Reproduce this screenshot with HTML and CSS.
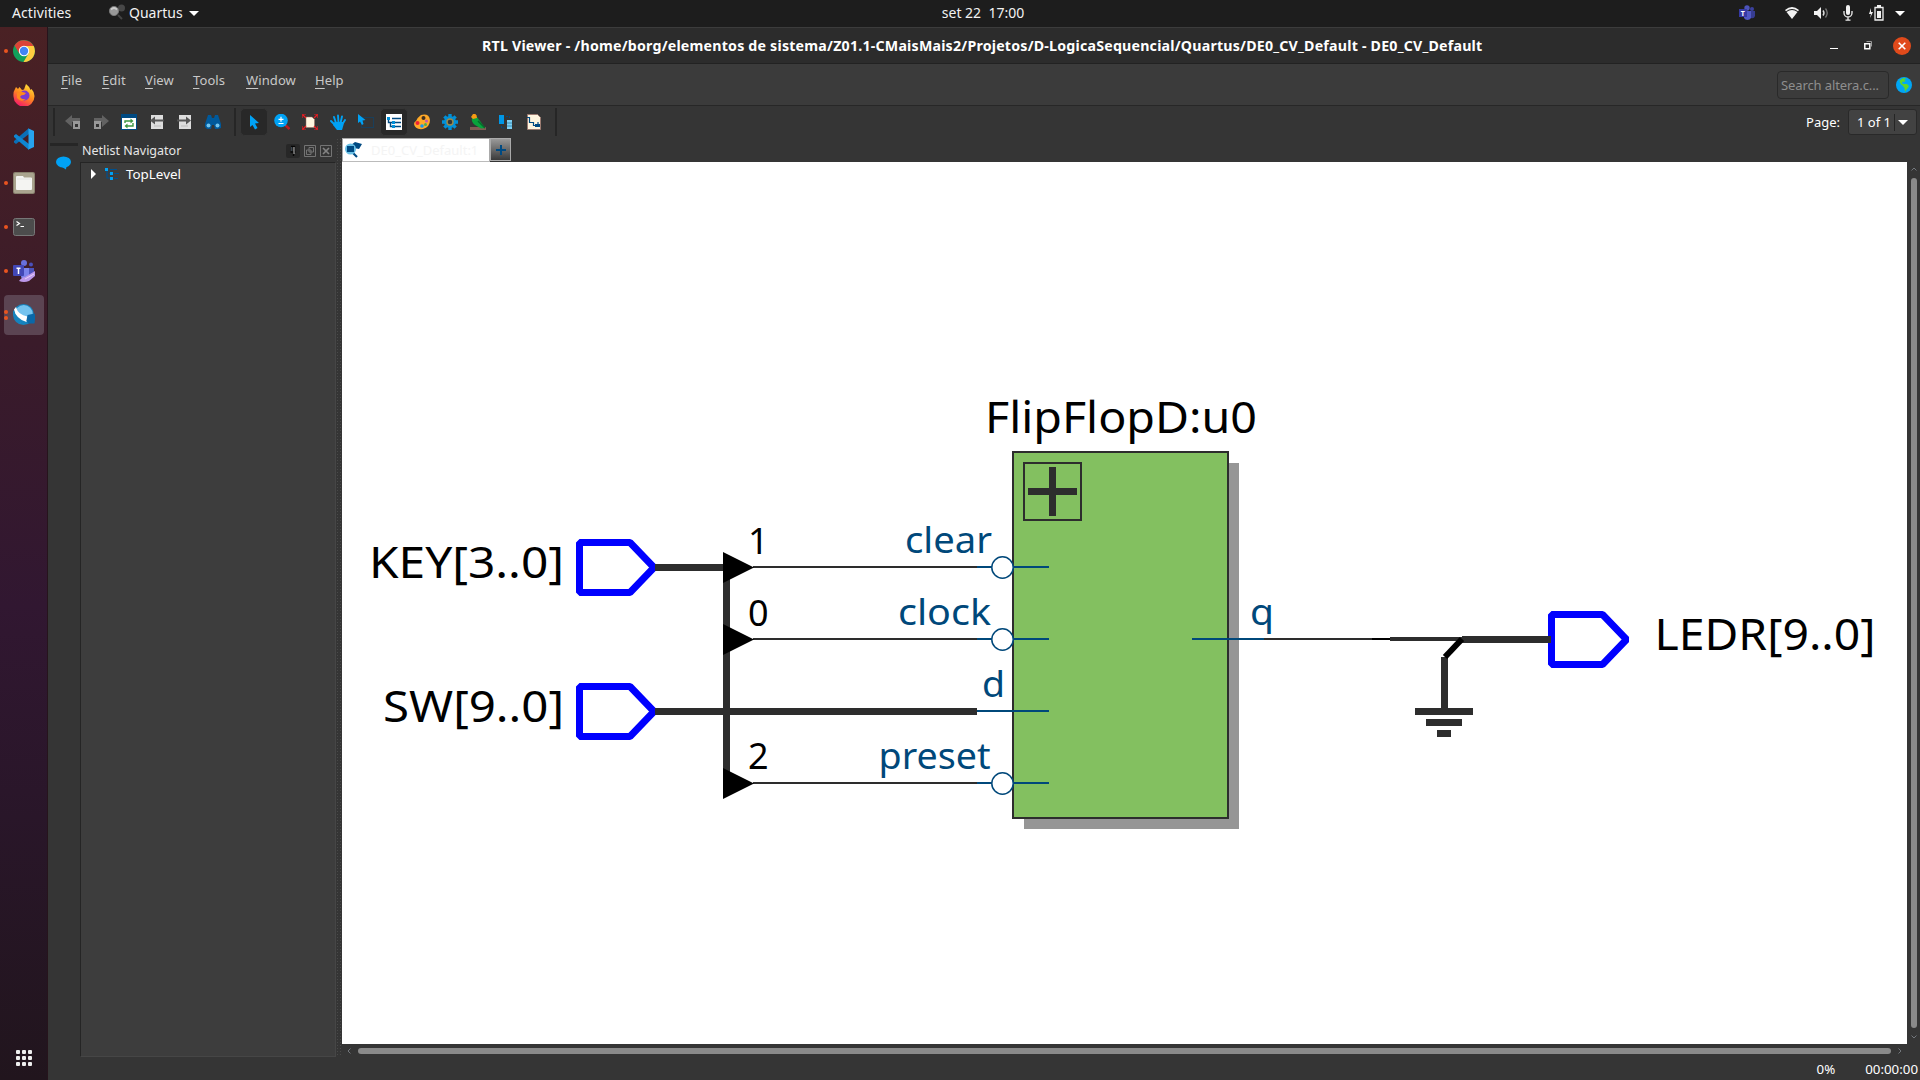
FILE: index.html
```html
<!DOCTYPE html>
<html lang="en">
<head>
<meta charset="utf-8">
<title>RTL Viewer</title>
<link rel="stylesheet" href="styles.css">
</head>
<body>
<header class="topbar">
  <div class="top-left">
    <span class="activities">Activities</span>
    <svg class="app-glyph" width="18" height="18" viewBox="0 0 18 18"><circle cx="13.5" cy="4" r="3.5" fill="#484848"/><circle cx="6" cy="7" r="4.600" fill="#999" stroke="#777"/><path d="M3 5.500q3-3 6 0" stroke="#ccc" stroke-width="2" fill="none"/><path d="M10 11l4 4" stroke="#444" stroke-width="2"/></svg>
    <span class="app-name">Quartus</span>
    <i class="caret"></i>
  </div>
  <div class="clock">set 22&nbsp; 17:00</div>
  <div class="tray">
    <svg width="18" height="16" viewBox="0 0 18 16"><circle cx="9" cy="3" r="2.7" fill="#4c53bb"/><circle cx="14" cy="4" r="2" fill="#3b419f"/><path d="M6 6h7v7a4 4 0 0 1-7 0z" fill="#5158c5"/><path d="M13 6h4v5q-1 3-4 2z" fill="#363c91"/><path d="M1 4h8v8H1z" fill="#3639a4"/><text x="2.7" y="10.7" class="tiny-t">T</text></svg>
    <svg class="wifi" width="16" height="14" viewBox="0 0 16 14"><path d="M1 4q7-6 14 0l-1 1.3q-6-4.500-12 0z" fill="#f2f2f2"/><path d="M2.500 6q5.500-4 11 0L8 13z" fill="#f2f2f2"/></svg>
    <svg class="sound" width="16" height="14" viewBox="0 0 16 14"><path d="M1 5h3l4-4v12L4 9H1z" fill="#f2f2f2"/><path d="M10 4.500q2 2.500 0 5" stroke="#ddd" fill="none" stroke-width="1.400"/><path d="M12.500 2.500q3.500 4.500 0 9" stroke="#777" fill="none" stroke-width="1.300"/></svg>
    <svg class="mic" width="10" height="16" viewBox="0 0 10 16"><rect x="3" y="0" width="4" height="10" rx="2" fill="#f2f2f2"/><path d="M1 6v2a4 4 0 0 0 8 0V6M5 12v3M2.500 15.200h5" stroke="#eee" stroke-width="1.300" fill="none"/></svg>
    <svg class="battery" width="16" height="16" viewBox="0 0 16 16"><path d="M3 3L1 9h2l-1 4 3-6H3z" fill="#f2f2f2"/><path d="M7 2.500h8v12.500H7z" stroke="#eee" stroke-width="1.300" fill="none"/><path d="M9 6h4v7H9zM9 0h4v2H9z" fill="#f2f2f2"/></svg>
    <i class="caret"></i>
  </div>
</header>

<div class="desktop">
<nav class="dock">
  <div class="app run"><svg viewBox="0 0 22 22"><circle cx="11" cy="11" r="11" fill="#11a05b"/><path d="M1.500 5.500L6.300 13.500 11 6H20.600A11 11 0 0 0 1.500 5.500z" fill="#db4437"/><path d="M11 6h9.700A11 11 0 0 1 10.500 22L15.500 13.500z" fill="#ffcd40"/><circle cx="11" cy="11" r="5.200" fill="#fff"/><circle cx="11" cy="11" r="4.200" fill="#4285f4"/></svg></div>
  <div class="app"><svg viewBox="0 0 22 22"><defs><linearGradient id="fx" x1=".8" y1="0" x2=".3" y2="1"><stop offset="0" stop-color="#ffe93b"/><stop offset=".5" stop-color="#ff8a1e"/><stop offset="1" stop-color="#f5156c"/></linearGradient></defs><path d="M2 5l1-2 2 2 1.500-2 2.500 3 2-.5 2-5.500q4 3 4.500 6l1-1q3 3 3 7a10.500 10.500 0 0 1-21 .500Q0 8 2 5z" fill="url(#fx)"/><circle cx="11.500" cy="11.500" r="5" fill="#7a3bd0"/><path d="M4 9l4-1.500L13 9l-2 2q-3-.5-4 2 2 3 6 2 -5 4-9-1z" fill="#ff8a1e"/></svg></div>
  <div class="app"><svg viewBox="0 0 22 22"><path d="M16 0v6L3 16l-2-1.500V13L16 0z" fill="#0a6fb8"/><path d="M16 22v-6L3 6 1 7.500V9l15 13z" fill="#0f86d2"/><path d="M15.500.5L21 3v16l-5.500 2.500z" fill="#27a3ef"/></svg></div>
  <div class="app run"><svg viewBox="0 0 22 22"><rect width="22" height="22" rx="2" fill="#8a826f"/><rect x="1" y="1" width="20" height="20" rx="1.500" fill="#aaa48f"/><path d="M4 4h6l1 1.500h7q1 0 1 1V17q0 1-1 1H4q-1 0-1-1V5q0-1 1-1z" fill="#f4f4f2"/><path d="M4 7h14" stroke="#ddd" stroke-width=".7"/></svg></div>
  <div class="app run"><svg viewBox="0 0 22 22"><rect x=".5" y="2.500" width="21" height="17" rx="2" fill="#4c4c4c" stroke="#777"/><path d="M3.500 5.500l3 2-3 2M7.500 10.500H11" stroke="#fff" stroke-width="1.200" fill="none"/></svg></div>
  <div class="app run"><svg viewBox="0 0 22 22"><circle cx="11" cy="3" r="3" fill="#6870dd"/><circle cx="18" cy="4.500" r="2" fill="#4a50bb"/><path d="M8 8h8v7l-4 5q-4-1-4-4z" fill="#7b83eb"/><path d="M16 8h5v6l-5 3z" fill="#4c53bb"/><rect x="0" y="5" width="11" height="11" rx="1" fill="#4247b6"/><path d="M3.500 8.200h4M5.500 8v6" stroke="#fff" stroke-width="1.500"/><path d="M6 21q3-4 6-4l10-6v5l-6 5q-5 2-10 0z" fill="#bd98ea"/><path d="M12 19l9-5" stroke="#e4d2fa"/></svg></div>
  <div class="app run two active"><svg viewBox="0 0 22 22"><circle cx="10.500" cy="10.500" r="10.500" fill="#1683bd"/><circle cx="10.800" cy="10" r="9" fill="#74c3ef"/><path d="M0 6q3 7 14 10l1 4Q3 20 0 11z" fill="#1683bd"/><path d="M1 5.500L3 3Q5 11 14.500 12.500l-1 5.500Q3 15 1 5.500z" fill="#fff"/><path d="M14.500 11l7-1.500 1 2.500-1 7.500H15l-1.500-3z" fill="#0a68a8"/></svg></div>
  <div class="show-apps"><i></i><i></i><i></i><i></i><i></i><i></i><i></i><i></i><i></i></div>
</nav>

<main class="window">
  <div class="titlebar">
    <h1>RTL Viewer - /home/borg/elementos de sistema/Z01.1-CMaisMais2/Projetos/D-LogicaSequencial/Quartus/DE0_CV_Default - DE0_CV_Default</h1>
    <div class="win-buttons">
      <svg width="10" height="18" viewBox="0 0 10 18"><path d="M1 11.500h8" stroke="#fff"/></svg>
      <svg width="10" height="18" viewBox="0 0 10 18"><path d="M1.800 6.800h5v5h-5z" fill="none" stroke="#fff" stroke-width="1.500"/><path d="M3.500 4.500h5v5" fill="none" stroke="#999"/></svg>
      <svg width="18" height="18" viewBox="0 0 18 18"><circle cx="9" cy="9" r="9" fill="#e04a1b"/><path d="M5.700 5.700l6.600 6.600M12.300 5.700l-6.600 6.600" stroke="#fff" stroke-width="1.600"/></svg>
    </div>
  </div>

  <div class="menubar">
    <ul>
      <li class="m-file"><u>F</u>ile</li><li class="m-edit"><u>E</u>dit</li><li class="m-view"><u>V</u>iew</li><li class="m-tools"><u>T</u>ools</li><li class="m-window"><u>W</u>indow</li><li class="m-help"><u>H</u>elp</li>
    </ul>
    <div class="search">Search altera.c...</div>
    <svg class="globe" width="16" height="16" viewBox="0 0 16 16"><circle cx="8" cy="8" r="8" fill="#00a6f5"/><path d="M3.500 4q2-3 5.500-3l1 .5-2 1.500 1.500.5-1 1.500-2-.5-.5 2 2 .5h3l2 2-1 2-1.500 1.500L9 15l-.5-4L6.500 8.500 5 7.500 4 5.500z" fill="#5fd62a"/></svg>
  </div>

  <div class="toolbar">
    <i class="sep"></i>
    <div class="group first">
      <span class="tool"><svg viewBox="0 0 16 16"><path d="M0 7L7 1v3h8v4H7v5z" fill="#626262"/><path d="M8 7h7v8H8z" fill="#999"/><path d="M10 10h3v3h-3z" fill="#333"/></svg></span>
      <span class="tool"><svg viewBox="0 0 16 16"><path d="M16 7L9 1v3H1v4h8v5z" fill="#626262"/><path d="M1 7h7v8H1z" fill="#999"/><path d="M3 10h3v3H3z" fill="#333"/></svg></span>
      <span class="tool"><svg viewBox="0 0 16 16"><path d="M0 0h16v16H0z" fill="#004a82"/><path d="M1 4h14v11H1z" fill="#fff"/><path d="M4 9V7h6M12 9v3H6" fill="none" stroke="#3d9641" stroke-width="1.400"/><path d="M9.500 4.500l3 2.500-3 2.500zM6.500 9.500l-3 2.500 3 2.500z" fill="#3d9641"/></svg></span>
      <span class="tool"><svg viewBox="0 0 16 16"><path d="M2 1h12v14H2z" fill="#ddd"/><path d="M1 6.500l5-4v3h9v2H6v3z" fill="#555"/><path d="M5 12h7" stroke="#bbb"/></svg></span>
      <span class="tool"><svg viewBox="0 0 16 16"><path d="M2 1h12v14H2z" fill="#ddd"/><path d="M14 6.500l-5-4v3H0v2h9v3z" fill="#555"/><path d="M4 12h7" stroke="#bbb"/></svg></span>
      <span class="tool"><svg viewBox="0 0 16 16"><path d="M3 1h3l1 3h2l1-3h3l3 9v4l-3 1h-3l-1-4H7l-1 4H2l-2-2v-3z" fill="#00599b"/><circle cx="3.500" cy="11.500" r="2" fill="#72c4ee"/><circle cx="12.500" cy="11.500" r="2" fill="#72c4ee"/></svg></span>
    </div>
    <i class="sep"></i>
    <div class="group">
      <span class="tool on"><svg viewBox="0 0 16 16"><path d="M4 1v12l2.500-2 2.500 4.500 2.500-1.500L9 9.500l4-.5z" fill="#00a2f5"/></svg></span>
      <span class="tool"><svg viewBox="0 0 16 16"><path d="M11 11l4.500 4" stroke="#b51b20" stroke-width="2.400"/><circle cx="7" cy="6.500" r="6.800" fill="#00a2f5"/><path d="M7 2.800v5M4.500 5.300h5M4.500 9.500h5" stroke="#fff" stroke-width="1.200"/></svg></span>
      <span class="tool"><svg viewBox="0 0 16 16"><path d="M4 3h6l2.500 2.500V13.500H4z" fill="#fff5df" stroke="#9b6c60" stroke-width=".5"/><path d="M0 4V0h4M1 1l3 3M12 0h4v4M15 1l-3 3M0 12v4h4M1 15l3-3M12 16h4v-4M15 15l-3-3" stroke="#f11a20" stroke-width="1.200" fill="none"/></svg></span>
      <span class="tool"><svg viewBox="0 0 16 16"><path d="M6 9L4 3M8.500 9L8 1.500M10.500 9l1.500-6.500M12.500 10l2.500-4M5 11L1 7" stroke="#00a2f5" stroke-width="1.900" stroke-linecap="round"/><path d="M4.500 8h9v3L12 16H7l-4-5z" fill="#00a2f5"/></svg></span>
      <span class="tool"><svg viewBox="0 0 16 16"><path d="M3.500 3.500h12v10h-12z" fill="none" stroke="#004a82" stroke-dasharray="1 1"/><path d="M0 0v9l2-1.500L4 11l1.500-1L4.500 6.500 7.500 6z" fill="#00a2f5"/></svg></span>
      <span class="tool on"><svg viewBox="0 0 16 16"><path d="M0 0h16v16H0z" fill="#fff"/><path d="M6 4.500h9M9 8.500h6M9 12.500h6M2.500 5v3.500h4M4.500 8.500v4h3" stroke="#004a82" stroke-width="1.400" fill="none"/><path d="M1 3h3v3H1zM6 7h3v3H6zM6 11h3v3H6z" fill="#008fd8"/></svg></span>
      <span class="tool"><svg viewBox="0 0 16 16"><path d="M7 1q8-2 9 5 0 7-7 9-8 1-9-5 0-2 2-3 2-4 5-6z" fill="#ffa928"/><circle cx="9.500" cy="4" r="2" fill="#403020"/><circle cx="3.500" cy="9" r="2" fill="#ed2237"/><circle cx="8" cy="12" r="1.800" fill="#1698ed"/><circle cx="12.500" cy="7" r="1.500" fill="#c155b1"/><circle cx="11.500" cy="10.500" r="1.500" fill="#4caf50"/></svg></span>
      <span class="tool"><svg viewBox="0 0 16 16"><path d="M8 0v16M0 8h16M2.400 2.400l11.200 11.200M13.600 2.400L2.400 13.600" stroke="#0090d8" stroke-width="3.400"/><circle cx="8" cy="8" r="6" fill="#0090d8"/><circle cx="8" cy="8" r="3" fill="#353535" stroke="#9c8b49" stroke-width="1.400"/></svg></span>
      <span class="tool"><svg viewBox="0 0 16 16"><path d="M0 13h16v3H0z" fill="#805c54"/><path d="M2 4l5-1q2 3 3 4l5 7-4 0.500-6-3.500q-4-3-3-7z" fill="#08a33b"/><path d="M8 7l7 7" stroke="#056a2b" stroke-width="1.500"/><path d="M1 3l2-3q4-1 4 4L3 5z" fill="#f59b13"/></svg></span>
      <span class="tool"><svg viewBox="0 0 16 16"><path d="M1 1h5v9H1z" fill="#0097e7"/><path d="M9 6h5v9H9z" fill="#7fcff2"/><path d="M8 2.500h3.500V5M3.500 12v2H7" stroke="#004a82" fill="none" stroke-dasharray="2 1"/><path d="M9 9h5M9 12h5" stroke="#358cb6"/></svg></span>
      <span class="tool"><svg viewBox="0 0 16 16"><path d="M1.500.5h10l3 3v12h-13z" fill="#fff5df" stroke="#9b7b71"/><path d="M1 3.500h2.500v5h4v3h6M12 8v5" fill="none" stroke="#004a82" stroke-width="1.200"/><path d="M9 10h5v3H9z" fill="#004a82"/></svg></span>
    </div>
    <i class="sep"></i>
    <div class="pager"><span>Page:</span><div class="combo"><span>1 of 1</span><b><i class="caret"></i></b></div></div>
  </div>

  <div class="workspace">
    <div class="rail"><i class="rail-grip"></i><svg width="16" height="14" viewBox="0 0 16 14"><ellipse cx="7.500" cy="6" rx="7.500" ry="5.500" fill="#00a2f5"/><path d="M6 11l4 2.500.5-4z" fill="#00a2f5"/></svg></div>
    <section class="navigator">
      <div class="nav-head"><span>Netlist Navigator</span>
        <div class="nav-tools">
          <svg width="14" height="14" viewBox="0 0 14 14"><rect width="14" height="14" rx="2" fill="#272727"/><path d="M5 2.500h4M8.500 2v6M4.500 8h5M7.500 8v4" stroke="#050505" stroke-width="1.400"/><path d="M5.500 3v4" stroke="#3b4650"/><path d="M8 3v7" stroke="#c0c0c0"/></svg>
          <svg width="12" height="12" viewBox="0 0 12 12"><path d="M.5.5h11v11H.5zM5 2.500h4.500V7H5zM2.500 5H7v4.500H2.500z" fill="none" stroke="#747474"/></svg>
          <svg width="12" height="12" viewBox="0 0 12 12"><path d="M.5.5h11v11H.5z" fill="none" stroke="#747474"/><path d="M3 3l6 6M9 3l-6 6" stroke="#838383" stroke-width="1.700"/></svg>
        </div>
      </div>
      <div class="tree"><div class="tree-row"><i class="expander"></i><svg width="14" height="12" viewBox="0 0 14 12"><path d="M2 3v7h4M4 5.500h3M5 1.500h7M9 5.500h5M9 10.500h4" stroke="#004f8c" fill="none" stroke-width="1.200"/><path d="M0 0h3v3H0zM5 4h3v3H5zM5 9h3v3H5z" fill="#00a2f5"/></svg><span>TopLevel</span></div></div>
    </section>
    <i class="splitter"></i>
    <section class="viewer">
      <div class="tabs">
        <div class="tab"><svg width="18" height="18" viewBox="0 0 18 18"><path d="M7 4l4-3 7 2-3 5-5-1z" fill="#004a82"/><path d="M9 12l4 4" stroke="#004a82" stroke-width="2.200"/><circle cx="6.500" cy="8" r="5.500" fill="#69c0e6"/><path d="M3 5h7v6H3z" fill="#004a82"/></svg><span>DE0_CV_Default:1</span></div>
        <div class="add"><svg width="12" height="12" viewBox="0 0 12 12"><path d="M6 1v10M1 6h10" stroke="#004a82" stroke-width="2"/></svg></div>
      </div>
      <div class="sheet-row">
        <svg class="sheet" width="1565" height="882" viewBox="342 162 1565 882">
          <g class="wire thin"><path d="M753 567H978M753 639H978M753 783H978M1264 639H1373"/></g>
          <path class="wire black" d="M1372 639H1390"/>
          <path class="wire mid" d="M1390 639H1463"/>
          <path class="shadow" d="M1024 463h215v366h-215z"/>
          <path class="block" d="M1013 452h215v366h-215z"/>
          <path class="expand" d="M1024 463h57v57h-57z"/>
          <path class="wire bus" d="M1028 491.500H1077M1052.500 467V516"/>
          <g class="pin">
            <path d="M579.500 542.500H630L654 567.500L630 592.500H579.500Z"/>
            <path d="M579.500 686.500H630L654 711.500L630 736.500H579.500Z"/>
            <path d="M1551.500 614.500H1602.500L1626.500 639.500L1602.500 664.500H1551.500Z"/>
          </g>
          <path class="wire bus" d="M655 567.500H724M655 711.500H977M726.500 567V784M1462 639.500H1551M1444.500 657V709M1415 711.500H1473M1426 722.500H1462M1437 733.500H1451"/>
          <path class="wire diag" d="M1445 657L1462 639"/>
          <path d="M723 552l31 15.500-31 15.500zM723 624l31 15.500-31 15.500zM723 768l31 15.500-31 15.500z"/>
          <g class="port"><path d="M977 567H992M1013 567H1049M977 639H992M1013 639H1049M977 711H1049M977 783H992M1013 783H1049M1192 639H1264"/><g fill="#fff"><circle cx="1002.500" cy="567.500" r="10.700"/><circle cx="1002.500" cy="639.500" r="10.700"/><circle cx="1002.500" cy="783.500" r="10.700"/></g></g>
          <g class="name">
            <text x="369" y="577.500" textLength="195" lengthAdjust="spacingAndGlyphs">KEY[3..0]</text>
            <text x="383" y="721.500" textLength="181" lengthAdjust="spacingAndGlyphs">SW[9..0]</text>
            <text x="985" y="433" textLength="272" lengthAdjust="spacingAndGlyphs">FlipFlopD:u0</text>
            <text x="1654.500" y="650" textLength="221" lengthAdjust="spacingAndGlyphs">LEDR[9..0]</text>
          </g>
          <g class="bit"><text x="748" y="553.500">1</text><text x="748" y="625.500">0</text><text x="748" y="769">2</text></g>
          <g class="portname">
            <text x="905" y="553" textLength="87" lengthAdjust="spacingAndGlyphs">clear</text><text x="898" y="625" textLength="93" lengthAdjust="spacingAndGlyphs">clock</text><text x="982" y="697" textLength="23" lengthAdjust="spacingAndGlyphs">d</text><text x="878.500" y="769" textLength="112" lengthAdjust="spacingAndGlyphs">preset</text><text x="1250" y="625" textLength="24" lengthAdjust="spacingAndGlyphs">q</text>
          </g>
        </svg>
        <div class="vscroll"><svg width="6" height="4" viewBox="0 0 6 4"><path d="M.5 3.500L3 1l2.500 2.500"/></svg><i></i><svg width="6" height="4" viewBox="0 0 6 4"><path d="M.5.5L3 3 5.500.5"/></svg></div>
      </div>
      <div class="hscroll"><svg width="4" height="6" viewBox="0 0 4 6"><path d="M3.500.5L1 3l2.500 2.500"/></svg><i></i><svg width="4" height="6" viewBox="0 0 4 6"><path d="M.5.5L3 3 .5 5.500"/></svg></div>
    </section>
  </div>
  <footer class="status"><span>0%</span><span>00:00:00</span></footer>
</main>
</div>
</body>
</html>
```
FILE: styles.css
```css
* { box-sizing: border-box; }
body { margin: 0; width: 1920px; height: 1080px; overflow: hidden; background: #353535; color: #fff; font: 13px "Noto Sans", sans-serif; display: flex; flex-direction: column; }
svg { display: block; flex: none; }
i { display: block; flex: none; }
span { white-space: nowrap; }
.caret { width: 0; height: 0; border: 5px solid transparent; border-top-color: #fff; border-bottom: 0; }

.topbar { height: 27px; flex: none; background: #1d1d1d; display: grid; grid-template-columns: 1fr auto 1fr; align-items: center; color: #f2f2f2; font-size: 14px; line-height: 18px; padding-bottom: 1px; }
.top-left { display: flex; align-items: center; padding-left: 12px; }
.activities { width: 96px; letter-spacing: 0.1px; }
.app-glyph { margin-right: 3px; }
.app-name { width: 56px; margin-right: 4px; }
.clock { width: 84px; text-align: center; margin-left: 48px; margin-right: 0; white-space: nowrap; position: relative; left: -1px; }
.tray { display: flex; align-items: center; justify-content: flex-end; padding-right: 15px; }
.wifi { margin-left: 28px; }
.sound { margin-left: 13px; }
.mic { margin-left: 14px; }
.battery { margin: 0 11px 0 15px; }
.tiny-t { font: bold 7px "Noto Sans", sans-serif; fill: #fff; }

.desktop { flex: 1; display: flex; min-height: 0; }
.dock { width: 48px; flex: none; background: linear-gradient(#4a2124, #3a1b2a 30%, #311731 55%, #291629 75%, #21151d); border-right: 1px solid #26141c; display: flex; flex-direction: column; align-items: center; padding-top: 4px; gap: 4px; }
.app { width: 40px; height: 40px; border-radius: 4px; position: relative; display: flex; align-items: center; justify-content: center; flex: none; }
.app svg { width: 22px; height: 22px; }
.app.run::before { content: ""; position: absolute; left: 0; top: 18px; width: 4px; height: 4px; border-radius: 2px; background: #e95420; }
.app.two::before { top: 15px; }
.app.two::after { content: ""; position: absolute; left: 0; top: 21px; width: 4px; height: 4px; border-radius: 2px; background: #e95420; }
.app.active { background: #5b4452; }
.show-apps { margin-top: auto; margin-bottom: 14px; display: grid; grid-template-columns: repeat(3, 4px); gap: 2px; }
.show-apps i { height: 4px; border-radius: 1px; background: #eee; }

.window { flex: 1; min-width: 0; display: flex; flex-direction: column; }
.titlebar { height: 37px; flex: none; background: #2c2c2c; border-top: 1px solid #3c3c3c; border-bottom: 1px solid #222; display: flex; align-items: center; padding: 0 9px 0 434px; justify-content: space-between; }
h1 { margin: 0; font-size: 14.200px; letter-spacing: 0.210px; font-weight: 700; white-space: nowrap; }
.win-buttons { display: flex; gap: 24px; }
.win-buttons svg:nth-child(2) { margin-right: -4px; }

.menubar { height: 42px; flex: none; background: #3b3b3b; border-bottom: 1px solid #272727; display: flex; align-items: center; padding-right: 8px; }
.menubar ul { margin: 0; padding: 0 0 10px 13px; display: flex; list-style: none; color: #c8c8c8; flex: 1; letter-spacing: 0.1px; }
.menubar u { text-underline-offset: 3px; }
.m-file { width: 41px; } .m-edit { width: 43px; } .m-view { width: 48px; } .m-tools { width: 53px; } .m-window { width: 69px; }
.search { width: 112px; height: 28px; border: 1px solid #292929; border-radius: 4px; color: #8e8e8e; padding: 4px 3px; margin-right: 7px; white-space: nowrap; letter-spacing: -0.1px; }

.toolbar { height: 32px; flex: none; display: flex; align-items: center; padding: 0 3px 0 5px; }
.sep { width: 2px; height: 28px; background: #262626; }
.group { display: flex; margin: 0 7px 0 4px; }
.tool { width: 28px; height: 28px; display: flex; align-items: center; justify-content: center; }
.tool.on { background: #282828; border: 1px solid #353535; border-radius: 5px; }
.tool svg { width: 16px; height: 16px; }
.pager { margin-left: auto; display: flex; align-items: center; gap: 8px; }
.combo { width: 69px; height: 26px; border: 1px solid #292929; border-radius: 3px; background: #424242; display: flex; align-items: center; padding-left: 8px; }
.combo b { margin-left: auto; border-left: 1px solid #252525; height: 17px; padding: 6px 8px 0 3px; }

.workspace { flex: 1; min-height: 0; display: flex; }
.rail { width: 32px; flex: none; padding: 5px 2px; }
.rail-grip { width: 28px; height: 3px; background: #262626; margin-bottom: 10px; }
.rail svg { margin-left: 6px; }
.navigator { width: 256px; flex: none; display: flex; flex-direction: column; }
.nav-head { height: 24px; flex: none; display: flex; align-items: center; justify-content: space-between; padding: 1px 4px 0 2px; font-size: 12.500px; color: #e6e6e6; }
.nav-tools { display: flex; align-items: center; gap: 4px; }
.tree { height: 895px; background: #3d3d3d; border: 1px solid #464646; border-top-color: #252525; border-left-color: #252525; padding: 2px 10px; }
.tree-row { display: flex; align-items: center; height: 18px; font-size: 13.400px; }
.expander { width: 0; height: 0; border: 5px solid transparent; border-left-color: #fff; border-right: 0; margin-right: 9px; }
.tree-row span { margin-left: 7px; }
.splitter { width: 6px; background: radial-gradient(circle, #4a4a4a 0.7px, transparent 1px) 0 0 / 3px 3px; height: 919px; }
.viewer { flex: 1; display: flex; flex-direction: column; }
.tabs { height: 24px; flex: none; display: flex; }
.tab { width: 148px; background: #fff; border: 1px solid #aaa; border-bottom: 1px solid #bbb; color: #f4f4f4; display: flex; align-items: center; padding-left: 1px; }
.tab span { margin-left: 9px; font-size: 13px; }
.add { width: 21px; height: 23px; border: 1px solid #aaa; background: linear-gradient(#999, #3a3a3a); display: grid; place-items: center; }
.sheet-row { display: flex; height: 882px; }
.sheet { background: #fff; }
.vscroll { width: 13px; display: flex; flex-direction: column; align-items: center; padding: 5px 0; }
.vscroll i { width: 6px; flex: 1; background: #8a8a8a; border-radius: 3px; margin: 7px 0; }
.vscroll svg, .hscroll svg { fill: none; stroke: #73777c; }
.hscroll { height: 13px; width: 1565px; display: flex; align-items: center; padding: 0 5px; }
.hscroll i { height: 6px; flex: 1; background: #8a8a8a; border-radius: 3px; margin: 0 7px; }

.wire { fill: none; stroke: #2d2d2d; }
.thin { stroke-width: 2; }
.black { stroke: #000; stroke-width: 2; }
.mid { stroke-width: 4; }
.bus { stroke-width: 7; }
.diag { stroke: #000; stroke-width: 6; }
.pin { fill: none; stroke: #00f; stroke-width: 7; stroke-linejoin: bevel; }
.shadow { fill: #969696; }
.block { fill: #83c060; stroke: #2d2d2d; stroke-width: 2; }
.expand { fill: none; stroke: #2d2d2d; stroke-width: 2; }
.port { stroke: #00487a; stroke-width: 2; fill: none; }
.port circle { fill: #fff; stroke-width: 1.500; }
.name { font-size: 44px; }
.bit { font-size: 36px; }
.portname { font-size: 36px; fill: #00487a; }

.status { height: 23px; flex: none; display: flex; justify-content: flex-end; align-items: center; gap: 30px; padding: 1px 2px 0; font-size: 13.300px; }
```
